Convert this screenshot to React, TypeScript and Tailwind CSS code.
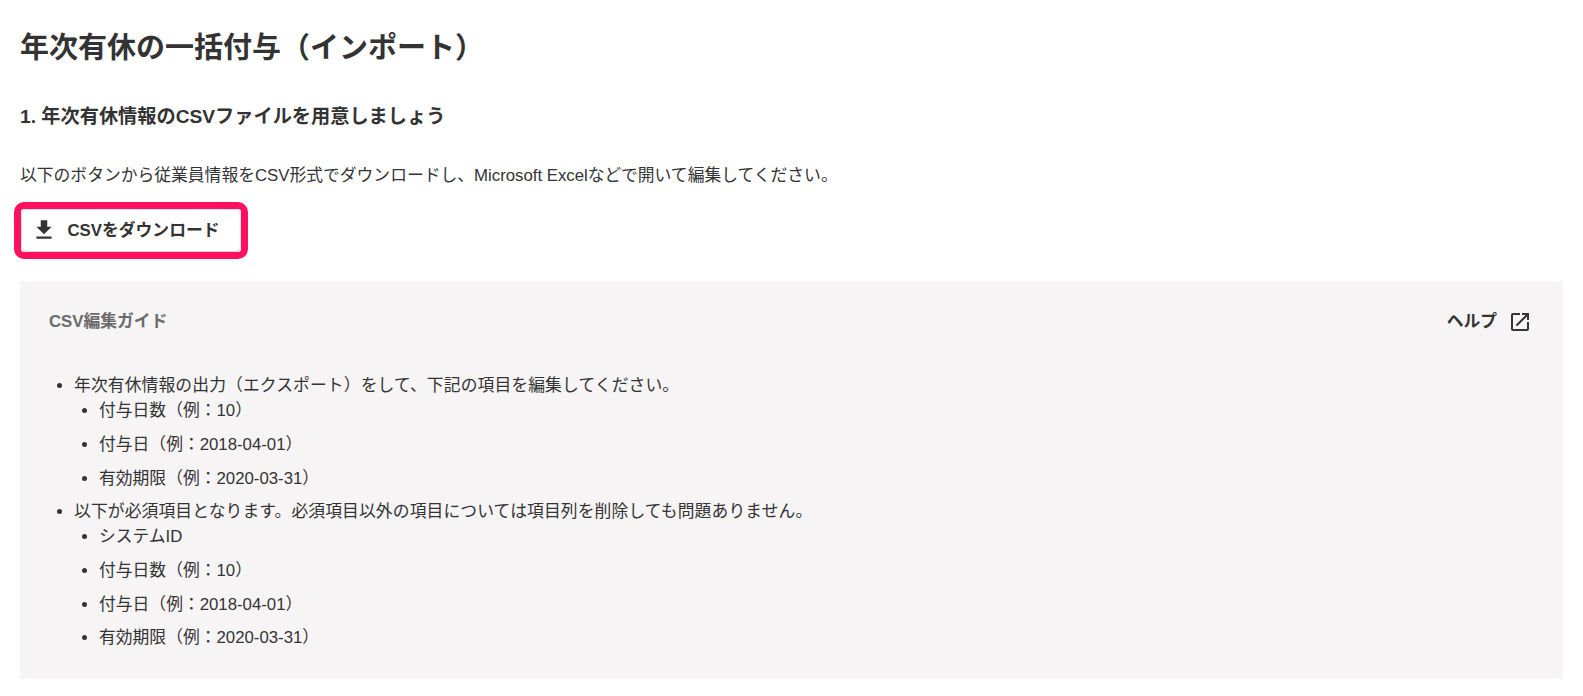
const fontStack = "font-['Liberation_Sans','Noto_Sans_CJK_JP',sans-serif]";

function SubList({ items }: { items: string[] }) {
  return (
    <ul className="list-disc pl-[25px] tracking-normal">
      {items.map((item) => (
        <li key={item} className="mb-[8.4px] leading-[25.2px] last:mb-0">
          {item}
        </li>
      ))}
    </ul>
  );
}

export default function App() {
  return (
    <div lang="ja" className={`${fontStack} min-h-[696px] bg-white px-5 pt-[27px] text-[#333]`}>
      <h1 className="text-[29px] leading-[42px] font-bold">年次有休の一括付与（インポート）</h1>
      <h2 className="mt-[34px] text-[19.2px] leading-[27px] font-bold">1. 年次有休情報のCSVファイルを用意しましょう</h2>
      <p className="mt-[33.4px] text-[16.8px] leading-[25.2px]">
        以下のボタンから従業員情報をCSV形式でダウンロードし、Microsoft Excelなどで開いて編集してください。
      </p>

      {/* button with pink annotation */}
      <div className="mt-[13.4px] ml-[-6px] w-[234px] rounded-[10px] border-[7px] border-[#ff1060]">
        <button className="flex h-[43px] w-full items-center rounded-md border border-[#e3e3e3] border-b-[#d6d6d6] bg-white pl-[9px] text-[16.8px] font-bold">
          <svg viewBox="0 0 24 24" width="26" height="26" fill="currentColor">
            <path d="M19 9h-4V3H9v6H5l7 7 7-7zM5 18v2h14v-2H5z" />
          </svg>
          <span className="ml-[10.5px]">CSVをダウンロード</span>
        </button>
      </div>

      {/* guide panel */}
      <section className="mt-[22px] h-[398px] w-[1543px] bg-[#f6f4f5] pt-[28.5px] pr-[31px] pl-[29px]">
        <div className="flex items-center justify-between">
          <h3 className="text-[16.8px] leading-[25.2px] font-bold text-[#6b6b6b]">CSV編集ガイド</h3>
          <a className="flex items-center gap-[11px] text-[16.8px] font-bold text-[#333]">
            ヘルプ
            <svg viewBox="0 0 24 24" width="24" height="24" fill="currentColor">
              <path d="M19 19H5V5h7V3H5c-1.11 0-2 .9-2 2v14c0 1.1.89 2 2 2h14c1.1 0 2-.9 2-2v-7h-2v7zM14 3v2h3.59l-9.83 9.83 1.41 1.41L19 6.41V10h2V3h-7z" />
            </svg>
          </a>
        </div>
        <ul className="mt-[38.5px] list-disc pl-[25px] text-[16.8px] leading-[25.2px] tracking-[0.11px]">
          <li className="mb-[8.4px]">
            年次有休情報の出力（エクスポート）をして、下記の項目を編集してください。
            <SubList items={['付与日数（例：10）', '付与日（例：2018-04-01）', '有効期限（例：2020-03-31）']} />
          </li>
          <li>
            以下が必須項目となります。必須項目以外の項目については項目列を削除しても問題ありません。
            <SubList items={['システムID', '付与日数（例：10）', '付与日（例：2018-04-01）', '有効期限（例：2020-03-31）']} />
          </li>
        </ul>
      </section>
    </div>
  );
}
